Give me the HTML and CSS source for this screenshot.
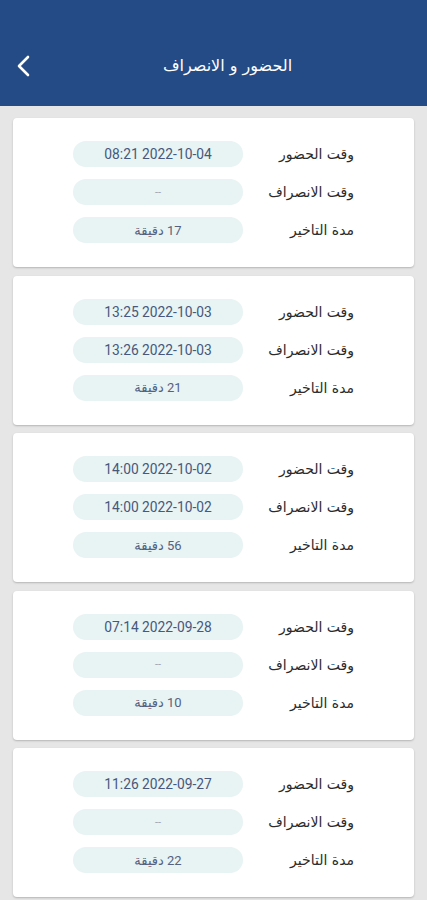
FILE: index.html
```html
<!DOCTYPE html>
<html lang="ar" dir="rtl">
<head>
<meta charset="utf-8">
<title>الحضور و الانصراف</title>
<link rel="stylesheet" href="styles.css">
</head>
<body>
<header class="appbar">
  <h1 class="title">الحضور و الانصراف</h1>
  <button class="back" aria-label="back">
    <svg width="16" height="22" viewBox="0 0 16 22"><path d="M13 2 L4 11 L13 20" fill="none" stroke="#fff" stroke-width="2.6" stroke-linecap="round" stroke-linejoin="round"/></svg>
  </button>
</header>
<main class="list">
  <section class="card">
    <div class="row"><span class="label">وقت الحضور</span><span class="pill"><bdi>08:21 2022-10-04</bdi></span></div>
    <div class="row"><span class="label">وقت الانصراف</span><span class="pill muted">--</span></div>
    <div class="row"><span class="label">مدة التاخير</span><span class="pill small">17 دقيقة</span></div>
  </section>
  <section class="card">
    <div class="row"><span class="label">وقت الحضور</span><span class="pill"><bdi>13:25 2022-10-03</bdi></span></div>
    <div class="row"><span class="label">وقت الانصراف</span><span class="pill"><bdi>13:26 2022-10-03</bdi></span></div>
    <div class="row"><span class="label">مدة التاخير</span><span class="pill small">21 دقيقة</span></div>
  </section>
  <section class="card">
    <div class="row"><span class="label">وقت الحضور</span><span class="pill"><bdi>14:00 2022-10-02</bdi></span></div>
    <div class="row"><span class="label">وقت الانصراف</span><span class="pill"><bdi>14:00 2022-10-02</bdi></span></div>
    <div class="row"><span class="label">مدة التاخير</span><span class="pill small">56 دقيقة</span></div>
  </section>
  <section class="card">
    <div class="row"><span class="label">وقت الحضور</span><span class="pill"><bdi>07:14 2022-09-28</bdi></span></div>
    <div class="row"><span class="label">وقت الانصراف</span><span class="pill muted">--</span></div>
    <div class="row"><span class="label">مدة التاخير</span><span class="pill small">10 دقيقة</span></div>
  </section>
  <section class="card">
    <div class="row"><span class="label">وقت الحضور</span><span class="pill"><bdi>11:26 2022-09-27</bdi></span></div>
    <div class="row"><span class="label">وقت الانصراف</span><span class="pill muted">--</span></div>
    <div class="row"><span class="label">مدة التاخير</span><span class="pill small">22 دقيقة</span></div>
  </section>
</main>
</body>
</html>
```
FILE: styles.css
```css
html, body {
  margin: 0;
  padding: 0;
}
body {
  background: #e6e6e6;
  font-family: "DejaVu Sans", sans-serif;
  direction: rtl;
  width: 427px;
  overflow: hidden;
}
.appbar {
  background: #244b85;
  height: 106px;
  box-sizing: border-box;
  padding-top: 24px;
  position: relative;
  display: flex;
  align-items: center;
  justify-content: center;
}
.title {
  margin: 0 0 0 28px;
  color: #fff;
  font-size: 16px;
  font-weight: normal;
  font-family: "DejaVu Sans", sans-serif;
}
.back {
  position: absolute;
  left: 13px;
  top: 54px;
  width: 20px;
  height: 24px;
  padding: 0;
  border: 0;
  background: none;
  display: flex;
  align-items: center;
  justify-content: center;
}
.list {
  padding: 12px 13px;
  display: flex;
  flex-direction: column;
  gap: 8.5px;
}
.card {
  background: #fff;
  border-radius: 4px;
  box-shadow: 0 1px 2px rgba(0,0,0,0.22);
  padding: 23px 60px 24px 0;
  display: flex;
  flex-direction: column;
  gap: 12px;
}
.row {
  display: grid;
  grid-template-columns: 111px 170px;
  align-items: center;
  height: 26px;
}
.label {
  font-size: 14px;
  color: #2b2b2b;
  text-align: right;
  font-family: "DejaVu Sans", sans-serif;
}
.pill {
  height: 26px;
  border-radius: 13px;
  background: #e8f3f3;
  display: flex;
  align-items: center;
  justify-content: center;
  font-family: Roboto, "DejaVu Sans", sans-serif;
  font-size: 13.8px;
  color: #46587c;
}
.pill.muted {
  color: #9aa3b0;
  font-size: 11px;
}
.pill.small {
  color: #54627f;
  font-size: 13px;
}
```
